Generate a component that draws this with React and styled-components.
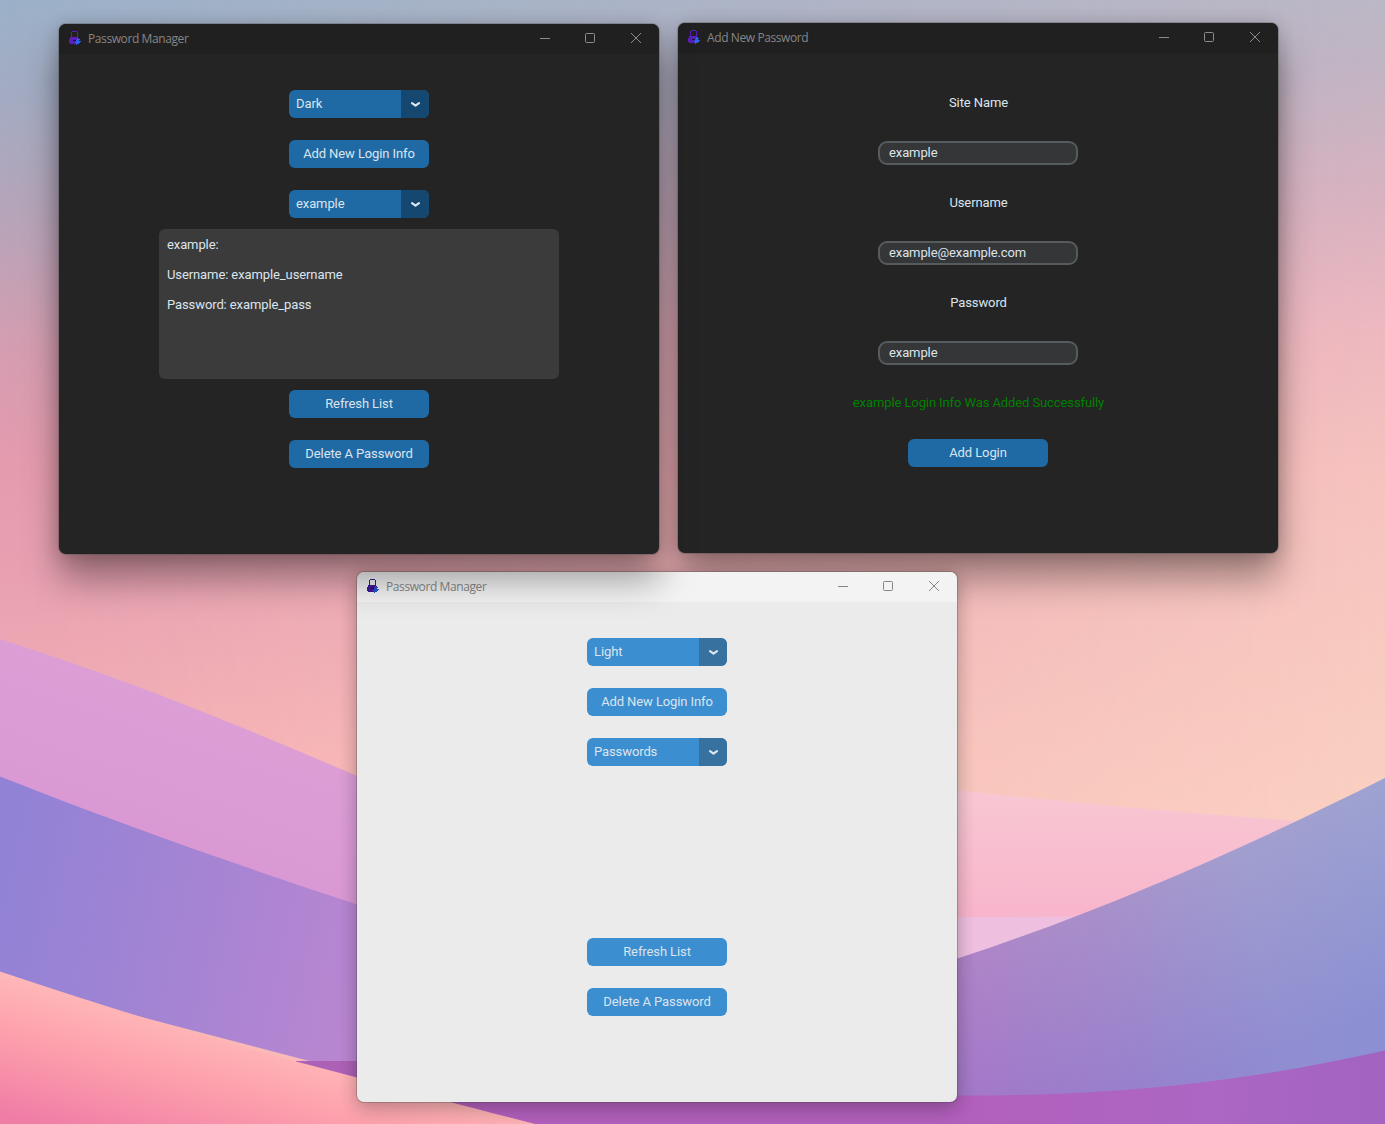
import React from "react";
import styled, { createGlobalStyle, ThemeProvider } from "styled-components";

const GlobalStyle = createGlobalStyle`
  * { box-sizing: border-box; }
  html, body { margin: 0; padding: 0; overflow: hidden; }
  button, input { font: inherit; letter-spacing: inherit; }
`;

const dark = {
  bar: "#202020",
  body: "#242424",
  caption: "#868686",
  control: "#8c8c8c",
  accent: "#1f6aa5",
  accentDark: "#144870",
  text: "#dce4ee",
  lock: "#5a1fb4",
  gear: "#2b62f0",
};

const light = {
  bar: "#f3f3f3",
  body: "#ebebeb",
  caption: "#878787",
  control: "#858585",
  accent: "#3b8ed0",
  accentDark: "#36719f",
  text: "#dce4ee",
  lock: "#42199a",
  gear: "#2456d0",
};

const Desktop = styled.main`
  position: relative;
  width: 1385px;
  height: 1124px;
  overflow: hidden;
  font-family: Roboto, "Liberation Sans", sans-serif;
  font-size: 13px;
  letter-spacing: -0.1px;
`;

const Wallpaper = styled.svg`
  display: block;
  width: 1385px;
  height: 1124px;
`;

const Window = styled.section`
  position: absolute;
  left: ${(p) => p.$x}px;
  top: ${(p) => p.$y}px;
  z-index: ${(p) => p.$z};
  width: 600px;
  height: 530px;
  display: flex;
  flex-direction: column;
  border-radius: 7px;
  background: ${(p) => p.theme.body};
  box-shadow:
    0 0 0 1px rgba(70, 70, 70, 0.3),
    0 2px 18px rgba(0, 0, 0, 0.2),
    0 ${(p) => (p.$soft ? 10 : 26)}px ${(p) => (p.$soft ? 20 : 36)}px rgba(0, 0, 0, ${(p) => (p.$soft ? 0.12 : 0.36)});
`;

const TitleBar = styled.header`
  display: flex;
  align-items: center;
  flex: 0 0 30px;
  padding: 0 16px 0 10px;
  border-radius: 7px 7px 0 0;
  background: ${(p) => p.theme.bar};
  color: ${(p) => p.theme.caption};
`;

const Caption = styled.h1`
  flex: 1;
  margin: 0 0 0 7px;
  font: 400 12px/16px "Open Sans", "Noto Sans", sans-serif;
  letter-spacing: -0.4px;
`;

const AppMark = styled.svg`
  display: block;
  margin-bottom: 1px;
`;

const Controls = styled.div`
  display: flex;
  gap: 33px;
  padding-bottom: 2px;
  color: ${(p) => p.theme.control};
  svg { display: block; }
`;

const Body = styled.div`
  display: flex;
  flex-direction: column;
  align-items: center;
  padding-top: 25px;
`;

const Slot = styled.div`
  display: flex;
  align-items: center;
  justify-content: center;
  height: 50px;
`;

const Button = styled.button`
  width: 140px;
  height: 28px;
  padding: 0 0 1px;
  border: 0;
  border-radius: 6px;
  background: ${(p) => p.theme.accent};
  color: ${(p) => p.theme.text};
  white-space: nowrap;
`;

const Menu = styled.button`
  display: flex;
  width: 140px;
  height: 28px;
  padding: 0;
  overflow: hidden;
  border: 0;
  border-radius: 6px;
  background: ${(p) => p.theme.accent};
  color: ${(p) => p.theme.text};
  text-align: left;
`;

const MenuValue = styled.span`
  flex: 1;
  padding-left: 7px;
  line-height: 27px;
`;

const MenuArrow = styled.span`
  display: flex;
  align-items: center;
  justify-content: center;
  width: 28px;
  height: 28px;
  background: ${(p) => p.theme.accentDark};
`;

const Details = styled.div`
  width: 400px;
  height: 150px;
  padding: 8px;
  border-radius: 6px;
  background: #3b3b3b;
  color: ${(p) => p.theme.text};
`;

const Line = styled.p`
  height: 30px;
  margin: 0;
  line-height: 15px;
`;

const Gap = styled.div`
  height: 150px;
`;

const Label = styled.label`
  padding: 0 0 1px 1px;
  color: ${(p) => p.$color || p.theme.text};
`;

const Entry = styled.input`
  width: 200px;
  height: 24px;
  padding: 0 9px 1px;
  border: 2px solid #565b5e;
  border-radius: 9px;
  outline: 0;
  background: #343638;
  color: ${(p) => p.theme.text};
`;

function LockIcon({ theme }) {
  return (
    <AppMark width="12" height="15" viewBox="0 0 12 15" shapeRendering="crispEdges">
      <path fill={theme.lock} d="M3 0h5v1H3zM2 1h1v6H2zM8 1h1v6H8z" />
      <path fill={theme.lock} d="M1 6h8v1h1v6H1v-1H0V8h1z" />
      <path fill="#18122f" d="M4 9h3v1H4z" />
      <path fill={theme.gear} d="M8 7h1v1h2v1h-1v1h2v1h-1v1h-1v1H8v1H7v-2H6v-1h1V9h1z" />
    </AppMark>
  );
}

function AppWindow({ title, theme, x, y, z, soft, children }) {
  return (
    <ThemeProvider theme={theme}>
      <Window $x={x} $y={y} $z={z} $soft={soft}>
        <TitleBar>
          <LockIcon theme={theme} />
          <Caption>{title}</Caption>
          <Controls>
            <svg width="13" height="12" viewBox="0 0 13 12">
              <path d="M2 6.5h10" stroke="currentColor" />
            </svg>
            <svg width="13" height="12" viewBox="0 0 13 12">
              <rect x="1.5" y="1.5" width="9" height="9" rx="1" fill="none" stroke="currentColor" />
            </svg>
            <svg width="13" height="12" viewBox="0 0 13 12">
              <path d="M1 1l10 10M11 1L1 11" fill="none" stroke="currentColor" />
            </svg>
          </Controls>
        </TitleBar>
        <Body>{children}</Body>
      </Window>
    </ThemeProvider>
  );
}

function OptionMenu({ value }) {
  return (
    <Slot>
      <Menu>
        <MenuValue>{value}</MenuValue>
        <MenuArrow>
          <svg width="12" height="8" viewBox="0 0 12 8">
            <path d="M3 3.100L6.500 5.600L10 3.100" fill="none" stroke="#dce4ee" strokeWidth="2.200" strokeLinecap="round" strokeLinejoin="round" />
          </svg>
        </MenuArrow>
      </Menu>
    </Slot>
  );
}

function Action({ children }) {
  return (
    <Slot>
      <Button>{children}</Button>
    </Slot>
  );
}

function Field({ label, value }) {
  return (
    <>
      <Slot><Label>{label}</Label></Slot>
      <Slot><Entry defaultValue={value} aria-label={label} /></Slot>
    </>
  );
}

function Stops({ list }) {
  return list.map(([offset, color]) => <stop key={offset} offset={offset} stopColor={color} />);
}

function Background() {
  return (
    <Wallpaper viewBox="0 0 1385 1124">
      <defs>
        <linearGradient id="skyLeft" x2="0" y2="1">
          <Stops list={[[0, "#9bb1c8"], [0.09, "#a3abc2"], [0.2, "#b8a4b8"], [0.31, "#d59db1"], [0.42, "#e59bae"], [0.53, "#e9a2b2"], [0.68, "#f6afb4"], [1, "#fbb5b4"]]} />
        </linearGradient>
        <linearGradient id="skyRight" x2="0" y2="1">
          <Stops list={[[0, "#bcb7c5"], [0.06, "#c2b4c3"], [0.18, "#d9b2c0"], [0.29, "#edb8bf"], [0.42, "#f6c2be"], [0.6, "#f8cbc0"], [0.75, "#fad1c3"], [1, "#fbd2c3"]]} />
        </linearGradient>
        <linearGradient id="fade">
          <stop offset="0" stopColor="#000" />
          <stop offset="1" stopColor="#fff" />
        </linearGradient>
        <mask id="across"><rect width="1385" height="1124" fill="url(#fade)" /></mask>
        <linearGradient id="orchid" gradientUnits="userSpaceOnUse" x1="150" y1="660" x2="90" y2="830">
          <Stops list={[[0, "#dd9fd6"], [1, "#d998d3"]]} />
        </linearGradient>
        <linearGradient id="violet" gradientUnits="userSpaceOnUse" x1="0" y1="900" x2="360" y2="980">
          <Stops list={[[0, "#9282d6"], [0.5, "#a484d3"], [1, "#b986d1"]]} />
        </linearGradient>
        <linearGradient id="coral" gradientUnits="userSpaceOnUse" x1="120" y1="1000" x2="85" y2="1135">
          <Stops list={[[0, "#ffb9b8"], [0.45, "#fd9fac"], [1, "#f07da6"]]} />
        </linearGradient>
        <linearGradient id="pink" x2="0" y2="1">
          <Stops list={[[0, "#f8c8d3"], [1, "#f8b3cb"]]} />
        </linearGradient>
        <linearGradient id="periwinkle" gradientUnits="userSpaceOnUse" x1="960" y1="1010" x2="1385" y2="910">
          <Stops list={[[0, "#aa72c5"], [0.35, "#a083c9"], [0.7, "#9697d0"], [1, "#8f9bd3"]]} />
        </linearGradient>
        <linearGradient id="depth" gradientUnits="userSpaceOnUse" x1="1180" y1="860" x2="1250" y2="1060">
          <stop offset="0" stopColor="#c0b0cc" stopOpacity="0.3" />
          <stop offset="1" stopColor="#8078d4" stopOpacity="0.3" />
        </linearGradient>
        <linearGradient id="plum" gradientUnits="userSpaceOnUse" x1="960" y1="1100" x2="1385" y2="1110">
          <Stops list={[[0, "#b260bd"], [0.6, "#ac66c3"], [1, "#a263c1"]]} />
        </linearGradient>
      </defs>
      <rect width="1385" height="1124" fill="url(#skyLeft)" />
      <rect width="1385" height="1124" fill="url(#skyRight)" mask="url(#across)" />
      <path fill="url(#pink)" d="M900 784C1040 800 1180 813 1300 821L1300 930H900z" />
      <path fill="#eebfdf" d="M900 917.5L1140 916V1000H900z" />
      <path fill="url(#orchid)" d="M0 639C130 680 250 730 357 776L420 803V940L0 800z" />
      <path fill="url(#violet)" d="M0 776.500C120 824 240 866 357 904.500L420 924V1090L0 980z" />
      <path fill="#ad61b6" d="M296 1061H420V1124H296z" />
      <path fill="url(#periwinkle)" d="M900 977C1080 922 1235 853 1385 778V1124H900z" />
      <path fill="url(#depth)" d="M900 977C1080 922 1235 853 1385 778V1124H900z" />
      <path fill="url(#plum)" d="M340 1080L960 1095.500C1110 1096 1240 1083 1385 1050.500V1124H340z" />
      <path fill="url(#coral)" d="M0 971.500C120 1012 240 1048 357 1077.500C420 1094 480 1110 535 1124H0z" />
    </Wallpaper>
  );
}

export default function App() {
  return (
    <>
      <GlobalStyle />
      <Desktop>
        <Background />
        <AppWindow title="Password Manager" theme={dark} x={59} y={24} z={3}>
          <OptionMenu value="Dark" />
          <Action>Add New Login Info</Action>
          <OptionMenu value="example" />
          <Details>
            <Line>example:</Line>
            <Line>Username: example_username</Line>
            <Line>Password: example_pass</Line>
          </Details>
          <Action>Refresh List</Action>
          <Action>Delete A Password</Action>
        </AppWindow>
        <AppWindow title="Add New Password" theme={dark} x={678} y={23} z={1}>
          <Field label="Site Name" value="example" />
          <Field label="Username" value="example@example.com" />
          <Field label="Password" value="example" />
          <Slot><Label $color="#008000">example Login Info Was Added Successfully</Label></Slot>
          <Action>Add Login</Action>
        </AppWindow>
        <AppWindow title="Password Manager" theme={light} x={357} y={572} z={2} soft>
          <OptionMenu value="Light" />
          <Action>Add New Login Info</Action>
          <OptionMenu value="Passwords" />
          <Gap />
          <Action>Refresh List</Action>
          <Action>Delete A Password</Action>
        </AppWindow>
      </Desktop>
    </>
  );
}
